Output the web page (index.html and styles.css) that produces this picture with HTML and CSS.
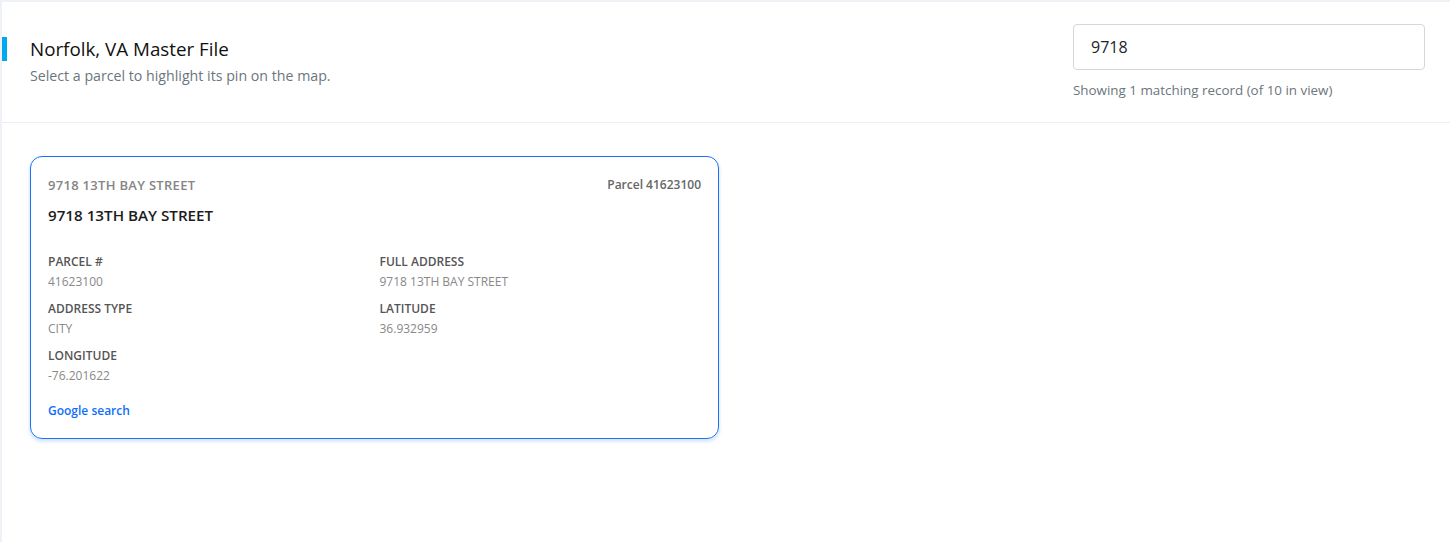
FILE: index.html
```html
<!DOCTYPE html>
<html>
<head>
  <title>Norfolk, VA Master File</title>
  <link rel="stylesheet" href="styles.css">
</head>
<body>

  <div class="panel">
    <div class="header">
      <div class="heading">
        <h1 class="title">Norfolk, VA Master File</h1>
        <p class="subtitle">Select a parcel to highlight its pin on the map.</p>
      </div>
      <div class="search">
        <input type="text" id="filter" value="9718">
        <p class="count">Showing 1 matching record (of 10 in view)</p>
      </div>
    </div>

    <div class="results">
      <div class="card selected">
        <div class="card-top">
          <span class="kicker">9718 13TH BAY STREET</span>
          <span class="parcel">Parcel 41623100</span>
        </div>
        <div class="card-title">9718 13TH BAY STREET</div>
        <div class="fields">
          <div class="field">
            <div class="label">PARCEL #</div>
            <div class="value">41623100</div>
          </div>
          <div class="field">
            <div class="label">FULL ADDRESS</div>
            <div class="value">9718 13TH BAY STREET</div>
          </div>
          <div class="field">
            <div class="label">ADDRESS TYPE</div>
            <div class="value">CITY</div>
          </div>
          <div class="field">
            <div class="label">LATITUDE</div>
            <div class="value">36.932959</div>
          </div>
          <div class="field">
            <div class="label">LONGITUDE</div>
            <div class="value">-76.201622</div>
          </div>
        </div>
        <a class="link" href="#">Google search</a>
      </div>
    </div>
  </div>

</body>
</html>
```

FILE: styles.css
```css
body {
  margin: 0;
  background-color: #eef1f5;
  font-family: "Open Sans", Arial, sans-serif;
}

.panel {
  margin: 2px 0 0 2px;
  background-color: #fff;
  min-height: 540px;
}

.header {
  display: flex;
  justify-content: space-between;
  align-items: center;
  padding: 22px 25px 23px 0;
  border-bottom: 1px solid #eceef1;
}

.heading {
  margin-bottom: 2px;
}

.title {
  margin: 0;
  font-size: 18.8px;
  font-weight: 400;
  line-height: 24px;
  color: #111;
  border-left: 5px solid #00a8f0;
  padding-left: 23px;
}

.subtitle {
  margin: 5px 0 0 28px;
  font-size: 14.2px;
  line-height: 19px;
  color: #6c757d;
}

.search {
  width: 352px;
}

.search input {
  box-sizing: border-box;
  width: 100%;
  height: 46px;
  padding: 0 17px;
  font-family: "Open Sans", Arial, sans-serif;
  font-size: 16px;
  color: #212529;
  border: 1px solid #d3d7dc;
  border-radius: 4px;
}

.count {
  margin: 11px 0 0 0;
  font-size: 13.4px;
  line-height: 18px;
  color: #6c757d;
}

.results {
  padding: 33px 28px;
}

.card {
  width: 653px;
  padding: 19px 17px 18px 17px;
  border: 1px solid #1a73f5;
  border-radius: 12px;
  box-shadow: 0 2px 3px 1px rgba(26, 115, 245, 0.16);
}

.card-top {
  display: flex;
  justify-content: space-between;
  align-items: center;
  line-height: 18px;
}

.kicker {
  font-size: 13px;
  font-weight: 600;
  letter-spacing: 0.3px;
  color: #858585;
}

.parcel {
  font-size: 12px;
  font-weight: 600;
  color: #666;
}

.card-title {
  margin-top: 11px;
  font-size: 15.2px;
  line-height: 20px;
  font-weight: 600;
  color: #1c1c1c;
}

.fields {
  display: grid;
  grid-template-columns: 1fr 1fr;
  column-gap: 10px;
  row-gap: 11px;
  margin-top: 29px;
}

.label {
  font-size: 12px;
  line-height: 16px;
  font-weight: 600;
  color: #555;
}

.value {
  margin-top: 4px;
  font-size: 12px;
  line-height: 16px;
  color: #888;
}

.link {
  display: inline-block;
  margin-top: 19px;
  font-size: 12px;
  line-height: 16px;
  font-weight: 600;
  color: #0d6efd;
  text-decoration: none;
}
```
